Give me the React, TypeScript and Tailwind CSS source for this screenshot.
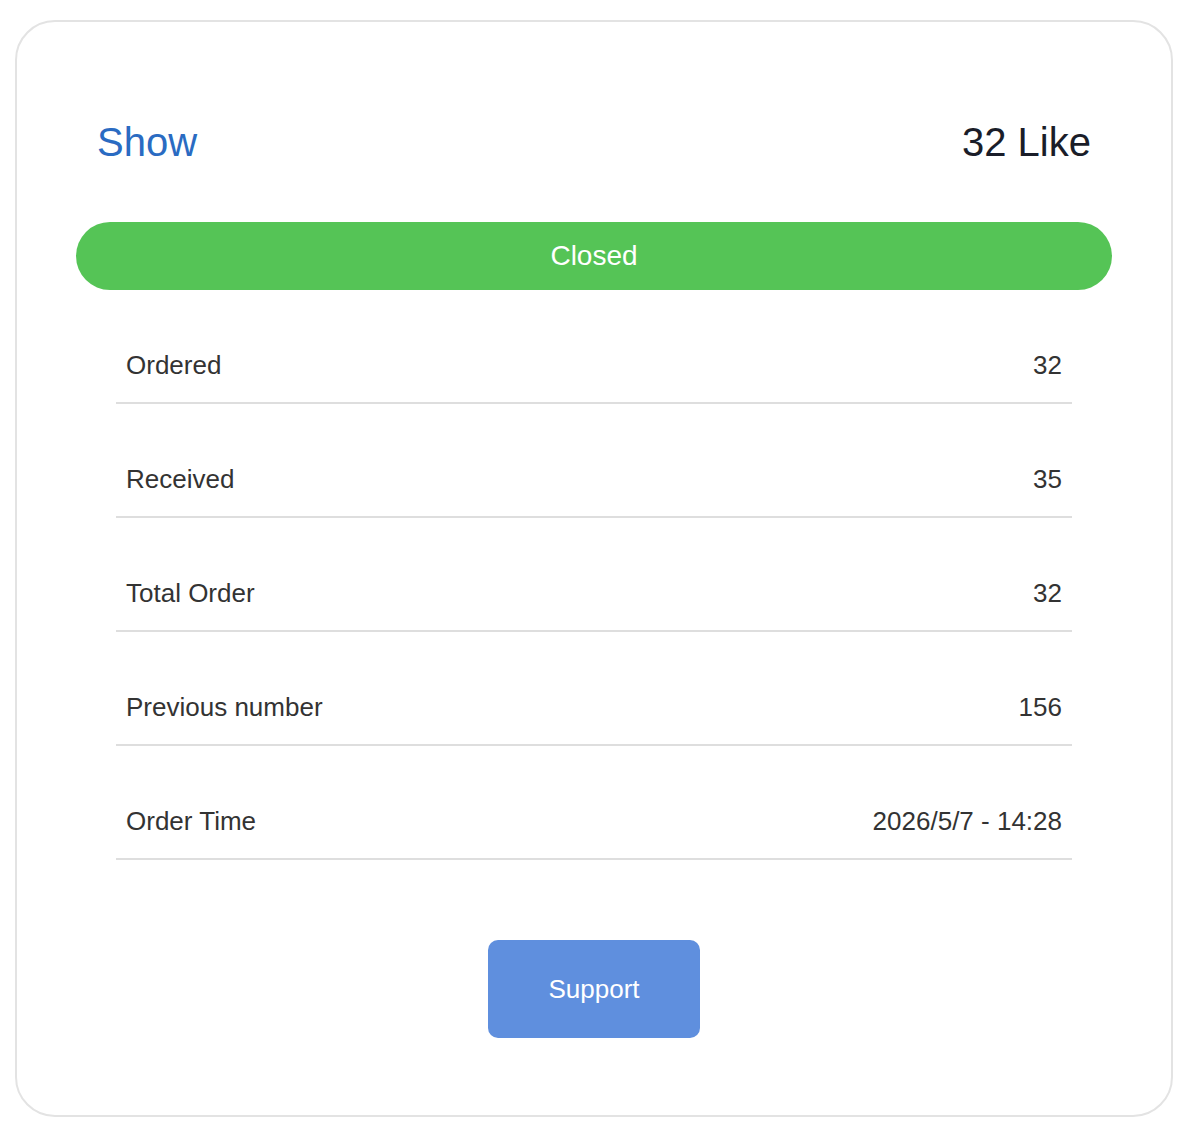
import React from "react";

const rows: [string, string][] = [
  ["Ordered", "32"],
  ["Received", "35"],
  ["Total Order", "32"],
  ["Previous number", "156"],
  ["Order Time", "2026/5/7 - 14:28"],
];

export default function App() {
  return (
    <div className="bg-white pt-[20px] pl-[15px] pb-[17px]" style={{ fontFamily: '"Liberation Sans", Arial, sans-serif' }}>
      <div className="w-[1158px] h-[1097px] rounded-[40px] border-2 border-[#e3e3e3] bg-white px-[59px] pt-[60px] flex flex-col">
        <div className="h-[120px] flex items-center justify-between px-[21px]">
          <span className="text-[40px] leading-[48px] text-[#2a6bc2]">Show</span>
          <span className="text-[40px] leading-[48px] text-[#1a1d29]">32 Like</span>
        </div>
        <div className="mt-[20px] h-[68px] rounded-full bg-[#55c456] flex items-center justify-center text-white text-[28px]">
          Closed
        </div>
        <div className="mx-[40px] flex flex-col">
          {rows.map(([k, v]) => (
            <div
              key={k}
              className="mt-[38px] h-[76px] border-b-2 border-[#dedede] flex items-center justify-between px-[10px] text-[26px] text-[#333333]"
            >
              <span>{k}</span>
              <span>{v}</span>
            </div>
          ))}
        </div>
        <div className="mt-[80px] flex justify-center">
          <button className="w-[212px] h-[98px] rounded-[10px] bg-[#5f8fde] text-white text-[26px]">
            Support
          </button>
        </div>
      </div>
    </div>
  );
}
